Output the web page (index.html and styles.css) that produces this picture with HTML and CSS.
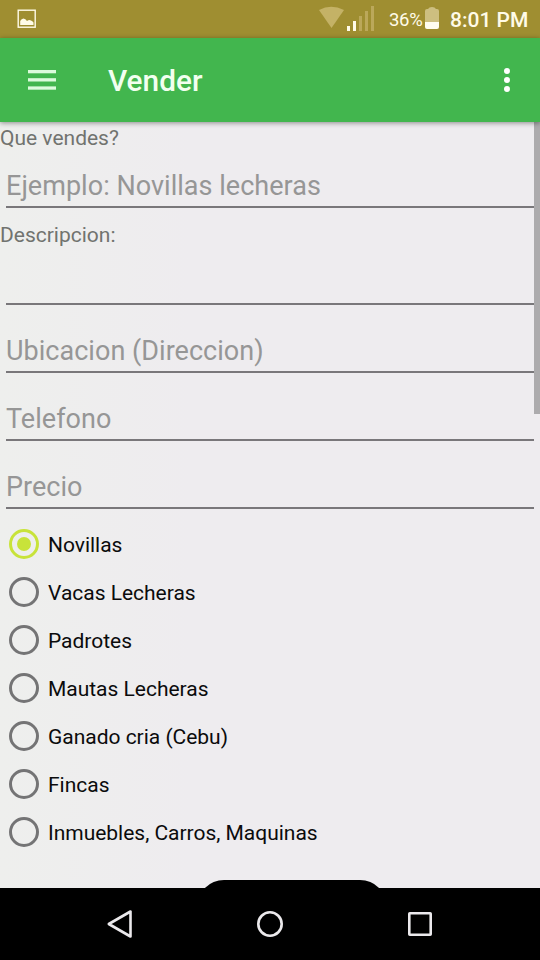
FILE: index.html
```html
<!DOCTYPE html>
<html lang="es">
<head>
<meta charset="utf-8">
<title>Vender</title>
<link rel="stylesheet" href="styles.css">
</head>
<body>
<div class="screen">
  <div class="status">
    <svg class="notif" width="20" height="20" viewBox="0 0 20 20"><rect x="1.200" y="1.200" width="17" height="17" fill="none" stroke="#fffbe8" stroke-width="1.400"/><path d="M3.200 16V12Q4.500 9.500 6.500 9.500Q8.500 9.800 10 12Q12 10.500 14 11.500Q16 12.500 16.500 13.500V16Z" fill="#fffbe8"/></svg>
    <svg class="signal" width="57" height="28" viewBox="0 0 57 28"><path d="M1 5Q13-1.500 26 5L13.500 23Z" fill="#c4b266"/><g fill="#fffbe8"><rect x="29" y="21" width="3" height="5"/><rect x="35" y="16" width="3" height="10"/></g><g fill="#bba85a"><rect x="41" y="11" width="3" height="15"/><rect x="47" y="6" width="3" height="20"/><rect x="53" y="1" width="3" height="25"/></g></svg>
    <span class="percent">36%</span>
    <svg class="battery" width="14" height="22" viewBox="0 0 14 22"><path d="M0 15V4Q0 2 2 2H3Q4 0 7 0T11 2H12Q14 2 14 4V15Z" fill="#cdbf80"/><path d="M0 15H14V20Q14 22 12 22H2Q0 22 0 20Z" fill="#fffdf0"/></svg>
    <span class="clock">8:01 PM</span>
  </div>
  <header class="appbar">
    <svg class="menu" width="28" height="20" viewBox="0 0 28 20" fill="#dcfbdc"><rect width="28" height="3.300"/><rect y="8.200" width="28" height="3.300"/><rect y="16.400" width="28" height="3.300"/></svg>
    <h1 class="title">Vender</h1>
    <svg class="more" width="6" height="24" viewBox="0 0 6 24" fill="#fff"><circle cx="3" cy="3" r="3"/><circle cx="3" cy="12" r="3"/><circle cx="3" cy="21" r="3"/></svg>
  </header>
  <main class="form">
    <div class="label">Que vendes?</div>
    <div class="field"><span class="hint">Ejemplo: Novillas lecheras</span></div>
    <div class="label">Descripcion:</div>
    <div class="field"><span class="hint"></span></div>
    <div class="field"><span class="hint">Ubicacion (Direccion)</span></div>
    <div class="field"><span class="hint">Telefono</span></div>
    <div class="field"><span class="hint">Precio</span></div>
    <div class="option"><span class="radio checked"></span><span class="name">Novillas</span></div>
    <div class="option"><span class="radio"></span><span class="name">Vacas Lecheras</span></div>
    <div class="option"><span class="radio"></span><span class="name">Padrotes</span></div>
    <div class="option"><span class="radio"></span><span class="name">Mautas Lecheras</span></div>
    <div class="option"><span class="radio"></span><span class="name">Ganado cria (Cebu)</span></div>
    <div class="option"><span class="radio"></span><span class="name">Fincas</span></div>
    <div class="option"><span class="radio"></span><span class="name">Inmuebles, Carros, Maquinas</span></div>
    <div class="submit"></div>
    <div class="scrollbar"></div>
  </main>
  <nav class="navbar">
    <svg width="150" height="72" viewBox="0 0 150 72"><path d="M63.800 36L85.500 23.500V48.500Z"/></svg>
    <svg width="150" height="72" viewBox="0 0 150 72"><circle cx="75" cy="36" r="11.700"/></svg>
    <svg width="150" height="72" viewBox="0 0 150 72"><rect x="64.300" y="25.300" width="21.400" height="21.400" rx="0.500"/></svg>
  </nav>
</div>
</body>
</html>
```
FILE: styles.css
```css
* { box-sizing: border-box; }
body { margin: 0; font-family: Roboto, "Liberation Sans", sans-serif; }
.screen { width: 540px; height: 960px; display: flex; flex-direction: column; overflow: hidden; }
.status { height: 38px; flex: none; background: #9f8e31; color: #fffbe8; display: flex; align-items: center; padding: 0 12px 0 17px; white-space: nowrap; }
.notif { margin-right: auto; }
.signal { margin-right: 14px; }
.percent { width: 36px; font-size: 18.5px; letter-spacing: -0.3px; padding-top: 2px; }
.battery { margin: 0 11px 2px 0; }
.clock { width: 78px; font-size: 21px; font-weight: 500; padding-top: 1px; }
.appbar { height: 84px; flex: none; background: #42b64e; display: flex; align-items: center; padding: 0 30px 0 28px; position: relative; z-index: 1; box-shadow: 0 1px 5px rgba(0, 0, 0, .42); }
.title { margin: 0 auto 0 52px; font-size: 29.8px; line-height: 34px; font-weight: 500; color: #f2fff0; padding-top: 1px; }
.form { height: 766px; flex: none; position: relative; overflow: hidden; background: linear-gradient(90deg, #eeefed, #eeecef 35%, #eeecef); }
.label { height: 29px; padding-top: 4px; font-size: 21px; line-height: 24px; color: #71736f; }
.field { height: 68px; padding: 19px 6px 11px; }
.hint { display: block; height: 38px; border-bottom: 2px solid #79777a; font-size: 27px; line-height: 32px; letter-spacing: 0.03px; color: #969696; }
.option { height: 48px; padding-left: 9px; display: flex; align-items: center; gap: 9px; font-size: 21px; line-height: 24px; letter-spacing: -0.02px; color: #0b0b0c; }
.name { padding-top: 1px; }
.radio { width: 30px; height: 30px; border: 3px solid #747475; border-radius: 50%; }
.checked { border-color: #c8e33a; display: flex; align-items: center; justify-content: center; }
.checked::before { content: ""; width: 14px; height: 14px; border-radius: 50%; background: #c8e33a; }
.submit { width: 190px; height: 60px; margin: 23.5px 0 0 197px; border-radius: 27px; background: #000; }
.scrollbar { position: absolute; top: 0; right: 0; width: 6px; height: 292px; background: #acabad; }
.navbar { height: 72px; flex: none; background: #000; display: flex; justify-content: center; }
.navbar svg { fill: none; stroke: #ebe9ec; stroke-width: 2.6; stroke-linejoin: round; }
```
